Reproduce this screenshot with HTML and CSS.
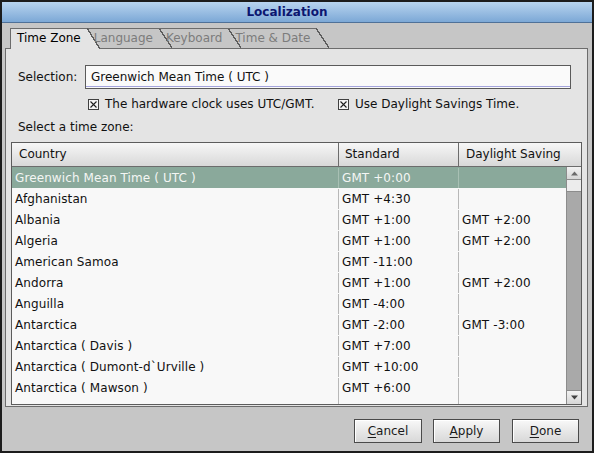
FILE: index.html
```html
<!DOCTYPE html>
<html>
<head>
<meta charset="utf-8">
<link rel="stylesheet" href="styles.css">
</head>
<body>
<div class="window">
  <div class="titlebar"><span>Localization</span></div>
  <div class="frame">
    <div class="tabs">
      <div class="tab active"><span>Time Zone</span></div>
      <div class="tab"><span>Language</span></div>
      <div class="tab"><span>Keyboard</span></div>
      <div class="tab"><span>Time &amp; Date</span></div>
    </div>
    <div class="panel">
      <div class="sel-row">
        <span class="sel-label">Selection:</span>
        <div class="input">Greenwich Mean Time ( UTC )</div>
      </div>
      <div class="checks">
        <div class="check first">
          <svg class="cb" width="11" height="11" viewBox="0 0 11 11"><rect x="0.5" y="0.5" width="10" height="10" fill="#f6f6f6" stroke="#404040"/><path d="M2.5 2.5L8.5 8.5M8.5 2.5L2.5 8.5" stroke="#202020" stroke-width="1.1"/></svg>
          <span>The hardware clock uses UTC/GMT.</span>
        </div>
        <div class="check">
          <svg class="cb" width="11" height="11" viewBox="0 0 11 11"><rect x="0.5" y="0.5" width="10" height="10" fill="#f6f6f6" stroke="#404040"/><path d="M2.5 2.5L8.5 8.5M8.5 2.5L2.5 8.5" stroke="#202020" stroke-width="1.1"/></svg>
          <span>Use Daylight Savings Time.</span>
        </div>
      </div>
      <div class="hint">Select a time zone:</div>
      <div class="table">
        <div class="thead">
          <div class="th c1">Country</div>
          <div class="th c2">Standard</div>
          <div class="th c3">Daylight Saving</div>
        </div>
        <div class="tbody">
          <div class="rows">
            <div class="row sel"><div class="c">Greenwich Mean Time ( UTC )</div><div class="c">GMT +0:00</div><div class="c"></div></div>
            <div class="row"><div class="c">Afghanistan</div><div class="c">GMT +4:30</div><div class="c"></div></div>
            <div class="row"><div class="c">Albania</div><div class="c">GMT +1:00</div><div class="c">GMT +2:00</div></div>
            <div class="row"><div class="c">Algeria</div><div class="c">GMT +1:00</div><div class="c">GMT +2:00</div></div>
            <div class="row"><div class="c">American Samoa</div><div class="c">GMT -11:00</div><div class="c"></div></div>
            <div class="row"><div class="c">Andorra</div><div class="c">GMT +1:00</div><div class="c">GMT +2:00</div></div>
            <div class="row"><div class="c">Anguilla</div><div class="c">GMT -4:00</div><div class="c"></div></div>
            <div class="row"><div class="c">Antarctica</div><div class="c">GMT -2:00</div><div class="c">GMT -3:00</div></div>
            <div class="row"><div class="c">Antarctica ( Davis )</div><div class="c">GMT +7:00</div><div class="c"></div></div>
            <div class="row"><div class="c">Antarctica ( Dumont-d`Urville )</div><div class="c">GMT +10:00</div><div class="c"></div></div>
            <div class="row"><div class="c">Antarctica ( Mawson )</div><div class="c">GMT +6:00</div><div class="c"></div></div>
            <div class="row filler"><div class="c"></div><div class="c"></div><div class="c"></div></div>
          </div>
          <div class="scroll">
            <div class="sbtn up"><svg width="7" height="5" viewBox="0 0 7 5"><path d="M3.5 0.5L7 4.5H0Z" fill="#6a6a6a"/></svg></div>
            <div class="thumb"></div>
            <div class="trough"></div>
            <div class="sbtn down"><svg width="7" height="5" viewBox="0 0 7 5"><path d="M0 0.5H7L3.5 4.5Z" fill="#404040"/></svg></div>
          </div>
        </div>
      </div>
    </div>
    <div class="buttons">
      <button class="btn wide"><u>C</u>ancel</button>
      <button class="btn"><u>A</u>pply</button>
      <button class="btn last"><u>D</u>one</button>
    </div>
  </div>
</div>
</body>
</html>
```

FILE: styles.css
```css
* { box-sizing: border-box; }
body {
  margin: 0;
  background: #000;
  font-family: "DejaVu Sans", "Verdana", sans-serif;
  font-size: 12px;
  color: #111;
}
.window {
  width: 594px;
  height: 453px;
  border: 2px solid #1c1c1c;
  display: flex;
  flex-direction: column;
  background: #c6c6c6;
}
.titlebar {
  flex: none;
  height: 21px;
  background: linear-gradient(#b8d4ef, #7ca8d6);
  border-bottom: 1px solid #4f7198;
  display: flex;
  align-items: center;
  justify-content: center;
  padding-right: 20px;
  font-weight: bold;
  color: #0c1670;
}
.frame {
  flex: 1;
  display: flex;
  flex-direction: column;
  padding: 5px 4px 0 3px;
  min-height: 0;
}
.tabs {
  flex: none;
  display: flex;
  height: 20px;
  padding-left: 5px;
  position: relative;
  z-index: 1;
}
.tab {
  position: relative;
  height: 20px;
  padding: 0 6px 0 7px;
  line-height: 19px;
  border-top: 1px solid #6c6c6c;
  color: #7c7c7c;
  white-space: nowrap;
}
.tab span { position: relative; z-index: 3; }
.tab::after {
  content: "";
  position: absolute;
  top: -1px;
  right: -13px;
  width: 13px;
  height: 20px;
  background: linear-gradient(to top right, transparent calc(50% - 0.7px), #5c5c5c calc(50% - 0.7px), #5c5c5c calc(50% + 0.7px), transparent calc(50% + 0.7px));
}
.tab.active {
  height: 21px;
  padding-left: 6px;
  background: #e4e4e4;
  color: #000;
  border-left: 1px solid #6c6c6c;
  z-index: 2;
}
.tab.active::after {
  height: 21px;
  background: linear-gradient(to top right, #e4e4e4 calc(50% - 0.7px), #5c5c5c calc(50% - 0.7px), #5c5c5c calc(50% + 0.7px), transparent calc(50% + 0.7px));
}
.panel {
  flex: none;
  position: relative;
  z-index: 0;
  height: 359px;
  background: #e4e4e4;
  border: 1px solid #6c6c6c;
  padding: 0 5px;
  display: flex;
  flex-direction: column;
}
.sel-row {
  display: flex;
  align-items: center;
  height: 24px;
  margin-top: 16px;
  padding: 0 11px 0 7px;
}
.sel-label { width: 67px; flex: none; }
.input {
  flex: 1;
  height: 24px;
  border: 1px solid #5a5a5a;
  background: #fafafa;
  padding-left: 5px;
  line-height: 22px;
  box-shadow: inset 0 -1px 0 #fafafa, inset 0 -2px 0 #a4a4dc;
}
.checks {
  display: flex;
  align-items: center;
  height: 14px;
  margin-top: 8px;
  padding-left: 77px;
}
.check { display: flex; align-items: center; gap: 6px; }
.check.first { width: 250px; }
.cb { display: block; flex: none; }
.hint {
  height: 14px;
  line-height: 14px;
  margin-top: 9px;
  padding-left: 7px;
}
.table {
  height: 263px;
  margin-top: 8px;
  border: 1px solid #5c5c5c;
  background: #f8f8f8;
  display: flex;
  flex-direction: column;
}
.thead {
  flex: none;
  display: flex;
  height: 24px;
  border-bottom: 1px solid #6c6c6c;
}
.th {
  background: linear-gradient(#f7f7f7, #d8d8d8);
  border-right: 1px solid #6c6c6c;
  line-height: 23px;
  padding-left: 6px;
}
.th.c1 { width: 327px; padding-left: 7px; }
.th.c2 { width: 120px; }
.th.c3 { flex: 1; border-right: none; padding-left: 7px; }
.tbody {
  flex: 1;
  display: flex;
  min-height: 0;
  overflow: hidden;
}
.rows {
  flex: 1;
  display: flex;
  flex-direction: column;
  letter-spacing: 0.1px;
}
.row {
  flex: none;
  display: grid;
  grid-template-columns: 327px 120px 1fr;
  height: 21px;
  line-height: 20px;
  padding-top: 1px;
}
.row.filler { flex: 1; padding-top: 0; }
.row .c {
  padding-left: 3px;
  border-right: 1px solid #b8b8b8;
  white-space: nowrap;
  overflow: hidden;
}
.row .c:last-child { border-right: none; }
.row.sel { background: #8aa99b; color: #f4f6f4; }
.row.sel .c { border-right-color: #a8c0b4; }
.scroll {
  width: 15px;
  flex: none;
  display: flex;
  flex-direction: column;
  background: #a9a9a9;
  border-left: 1px solid #8c8c8c;
}
.sbtn {
  flex: none;
  display: flex;
  align-items: center;
  justify-content: center;
  background: linear-gradient(#f2f2f2, #d6d6d6);
  border-bottom: 1px solid #8c8c8c;
}
.sbtn.up { height: 13px; }
.sbtn.down { height: 14px; border-top: 1px solid #8c8c8c; border-bottom: none; }
.thumb {
  flex: none;
  height: 12px;
  background: #ececec;
  border-bottom: 1px solid #8c8c8c;
}
.trough { flex: 1; }
.buttons {
  flex: 1;
  display: flex;
  justify-content: flex-end;
  align-items: flex-start;
  gap: 11px;
  padding: 12px 9px 0 0;
}
.btn {
  width: 67px;
  height: 24px;
  border: 1px solid #4a4a4a;
  background: linear-gradient(#f8f8f8, #d8d8d8);
  box-shadow: inset 1px 1px 0 #ffffff;
  font-family: "DejaVu Sans", "Verdana", sans-serif;
  font-size: 12px;
  color: #1a1a1a;
  padding: 0;
}
.btn.wide { width: 68px; }
.btn.last { margin-left: 1px; }
.btn u { text-decoration-thickness: 1px; text-underline-offset: 2px; }
```
